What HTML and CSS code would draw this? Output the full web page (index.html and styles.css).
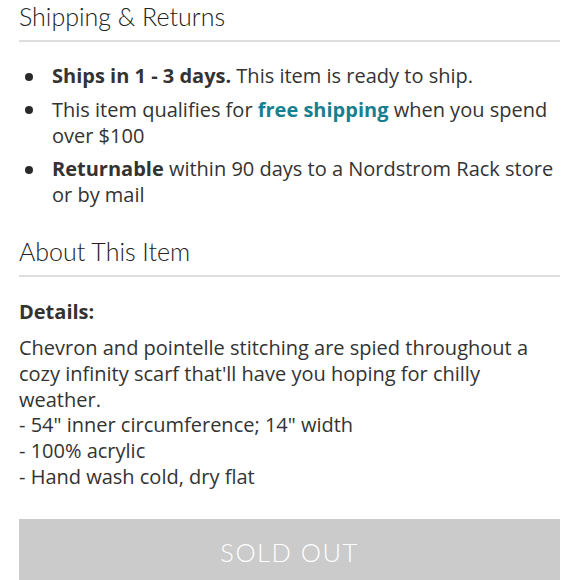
FILE: index.html
```html
<!DOCTYPE html>
<html>
<head>
<meta charset="utf-8">
<link rel="stylesheet" href="styles.css">
</head>
<body>
<div class="page">
  <h2 class="section-title">Shipping &amp; Returns</h2>
  <ul class="bullets">
    <li><b>Ships in 1 - 3 days.</b> This item is ready to ship.</li>
    <li>This item qualifies for <a class="link">free shipping</a> when you spend over $100</li>
    <li><b>Returnable</b> within 90 days to a Nordstrom Rack store or by mail</li>
  </ul>
  <h2 class="section-title about">About This Item</h2>
  <div class="details">
    <div class="details-label">Details:</div>
    <p class="details-text">Chevron and pointelle stitching are spied throughout a cozy infinity scarf that'll have you hoping for chilly weather.<br>- 54" inner circumference; 14" width<br>- 100% acrylic<br>- Hand wash cold, dry flat</p>
  </div>
  <button class="sold-out">SOLD OUT</button>
</div>
</body>
</html>
```

FILE: styles.css
```css
html, body {
  margin: 0;
  padding: 0;
  background: #fff;
}
.page {
  padding: 0 19px;
  font-family: "Open Sans", sans-serif;
  font-size: 20px;
  color: #333;
}
.section-title {
  margin: 0;
  padding-top: 1px;
  padding-bottom: 9px;
  font-family: "Lato", sans-serif;
  font-weight: 300;
  font-size: 25px;
  line-height: 30px;
  color: #222;
  border-bottom: 2px solid #dedede;
}
.section-title.about {
  padding-top: 0;
}
.bullets {
  list-style: none;
  margin: 0;
  padding: 21.4px 0 0 33px;
  line-height: 25.7px;
}
.bullets li {
  position: relative;
  margin-bottom: 7.9px;
}
.bullets li:last-child {
  margin-bottom: 28px;
}
.bullets li::before {
  content: "";
  position: absolute;
  left: -27px;
  top: 9.3px;
  width: 8px;
  height: 8px;
  border-radius: 50%;
  background: #2a2a2a;
}
.bullets b {
  font-weight: 700;
}
.link {
  color: #177f8f;
  font-weight: 700;
}
.details {
  padding-top: 22.6px;
  line-height: 25.7px;
}
.details-label {
  font-weight: 700;
  margin-bottom: 10.3px;
}
.details-text {
  margin: 0;
}
.sold-out {
  display: block;
  width: 100%;
  margin-top: 29.2px;
  height: 70px;
  border: 0;
  background: #cbcbcb;
  color: #fff;
  font-family: "Lato", sans-serif;
  font-weight: 300;
  font-size: 25.5px;
  letter-spacing: 1.5px;
  padding: 0 0 4px;
}
```
